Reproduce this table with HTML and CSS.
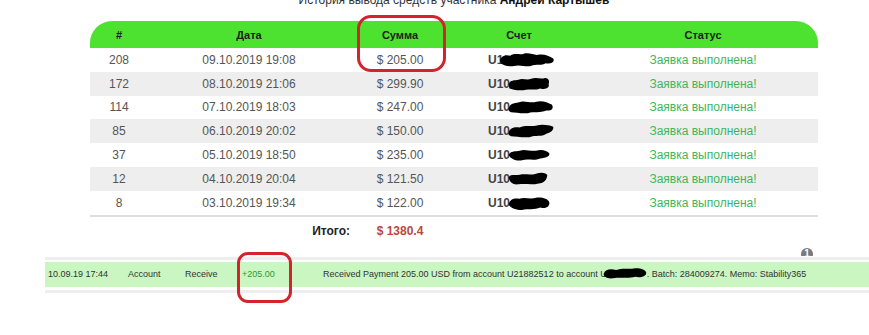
FILE: index.html
```html
<!DOCTYPE html>
<html lang="ru">
<head>
<meta charset="utf-8">
<title>История вывода средств</title>
<link rel="stylesheet" href="styles.css">
</head>
<body>
<div class="page">
  <h1 class="title">История вывода средств участника <b>Андрей Картышев</b></h1>

  <div class="table">
    <div class="row head"><div>#</div><div>Дата</div><div>Сумма</div><div>Счет</div><div>Статус</div></div>
    <div class="row"><div>208</div><div>09.10.2019 19:08</div><div>$ 205.00</div><div class="acc">U1<svg class="blob b1" viewBox="0 0 60 16" preserveAspectRatio="none"><path d="M1 9 C2 5 6 2 12 4 C16 1 22 3 26 2 C32 0 38 4 42 3 C48 2 54 4 58 7 C60 10 57 13 50 12 C46 15 40 12 34 15 C28 16 22 13 16 15 C10 16 4 14 2 12 Z"/></svg></div><div class="ok">Заявка выполнена!</div></div>
    <div class="row"><div>172</div><div>08.10.2019 21:06</div><div>$ 299.90</div><div class="acc">U10<svg class="blob b2" viewBox="0 0 60 16" preserveAspectRatio="none"><path d="M1 8 C3 3 9 4 15 3 C21 1 27 4 33 2 C41 0 47 3 53 1 C58 1 60 5 58 8 C60 12 54 15 46 13 C38 16 30 13 22 15 C14 16 6 14 2 13 Z"/></svg></div><div class="ok">Заявка выполнена!</div></div>
    <div class="row"><div>114</div><div>07.10.2019 18:03</div><div>$ 247.00</div><div class="acc">U10<svg class="blob b3" viewBox="0 0 60 16" preserveAspectRatio="none"><path d="M1 9 C3 3 10 4 17 2 C24 1 30 4 37 2 C44 0 52 3 57 5 C60 8 58 13 50 12 C42 15 34 13 26 15 C18 16 10 14 4 14 C1 13 0 11 1 9 Z"/></svg></div><div class="ok">Заявка выполнена!</div></div>
    <div class="row"><div>85</div><div>06.10.2019 20:02</div><div>$ 150.00</div><div class="acc">U10<svg class="blob b3" viewBox="0 0 60 16" preserveAspectRatio="none"><path d="M1 10 C2 5 8 3 15 4 C22 1 30 3 36 2 C44 0 52 1 59 3 C60 7 55 10 50 11 C44 15 36 12 28 15 C20 16 10 14 4 14 C1 13 0 12 1 10 Z"/></svg></div><div class="ok">Заявка выполнена!</div></div>
    <div class="row"><div>37</div><div>05.10.2019 18:50</div><div>$ 235.00</div><div class="acc">U10<svg class="blob b2" viewBox="0 0 60 16" preserveAspectRatio="none"><path d="M1 8 C3 3 10 4 17 3 C24 1 32 4 40 3 C48 1 56 3 59 6 C60 10 54 11 46 12 C38 15 28 12 20 14 C12 15 4 13 1 8 Z"/></svg></div><div class="ok">Заявка выполнена!</div></div>
    <div class="row"><div>12</div><div>04.10.2019 20:04</div><div>$ 121.50</div><div class="acc">U10<svg class="blob b4" viewBox="0 0 60 16" preserveAspectRatio="none"><path d="M1 6 C3 2 10 4 18 3 C26 2 34 4 42 2 C50 0 58 1 59 4 C58 9 54 13 46 13 C36 15 26 13 16 14 C8 15 2 12 1 6 Z"/></svg></div><div class="ok">Заявка выполнена!</div></div>
    <div class="row"><div>8</div><div>03.10.2019 19:34</div><div>$ 122.00</div><div class="acc">U10<svg class="blob b2" viewBox="0 0 60 16" preserveAspectRatio="none"><path d="M1 10 C2 4 8 2 16 3 C24 1 32 4 40 2 C48 1 57 3 59 7 C60 12 54 15 46 13 C38 16 28 14 20 16 C12 16 4 14 1 10 Z"/></svg></div><div class="ok">Заявка выполнена!</div></div>
  </div>

  <div class="total">
    <div></div>
    <div class="total-label">Итого:</div>
    <div class="total-sum">$ 1380.4</div>
  </div>

  <div class="badge-clip"><span class="badge">1</span></div>

  <div class="tx">
    <div class="tx-row">
      <span class="tx-date">10.09.19 17:44</span>
      <span class="tx-type">Account</span>
      <span class="tx-kind">Receive</span>
      <span class="tx-amount">+205.00</span>
      <span class="tx-desc">Received Payment 205.00 USD from account U21882512 to account U<svg class="blob b5" viewBox="0 0 60 16" preserveAspectRatio="none"><path d="M1 9 C3 3 10 2 18 4 C26 1 34 3 42 2 C50 1 59 4 59 8 C59 12 52 15 44 13 C34 16 24 13 14 15 C6 16 0 13 1 9 Z"/></svg>. Batch: 284009274. Memo: Stability365</span>
    </div>
  </div>

  <div class="mark mark-sum"></div>
  <div class="mark mark-tx"></div>
</div>
</body>
</html>
```

FILE: styles.css
```css
* { box-sizing: border-box; }

html, body {
  margin: 0;
  padding: 0;
  background: #fff;
}

body {
  font-family: "Liberation Sans", Arial, sans-serif;
  overflow: hidden;
}

.page {
  position: relative;
  width: 869px;
  height: 335px;
  overflow: hidden;
}

.title {
  margin: -7px 0 0 90px;
  width: 728px;
  text-align: center;
  font-size: 12px;
  line-height: 14px;
  font-weight: normal;
  color: #333;
}

.title b {
  color: #111;
}

.table {
  margin: 14px 0 0 90px;
  width: 728px;
  border-bottom: 2px solid #dedede;
}

.row {
  display: grid;
  grid-template-columns: 58px 202px 100px 138px 230px;
  height: 23.8px;
  align-items: center;
  text-align: center;
  font-size: 12px;
  color: #555;
}

.row:nth-child(odd):not(.head) {
  background: #eeeeee;
}

.row.head {
  height: 27px;
  background: #4de22f;
  border-radius: 22px 22px 0 0;
  font-size: 11px;
  font-weight: bold;
  color: #1c1c1c;
}

.acc {
  display: flex;
  align-items: center;
  text-align: left;
  padding-left: 38px;
  font-weight: bold;
  color: #444;
}

.blob {
  display: inline-block;
  height: 14px;
  fill: #000;
  margin-left: -2px;
}

.b1 { width: 56px; height: 15px; margin-left: -4px; }
.b2 { width: 42px; }
.b3 { width: 46px; }
.b4 { width: 40px; }
.b5 { width: 44px; height: 12px; vertical-align: middle; margin: -2px 0 0 -4px; }

.ok {
  color: #3db65a;
}

.total {
  margin-left: 90px;
  width: 728px;
  height: 28px;
  display: grid;
  grid-template-columns: 58px 202px 100px;
  align-items: center;
  font-size: 12px;
  font-weight: bold;
}

.total-label {
  text-align: right;
  color: #222;
}

.total-sum {
  text-align: center;
  color: #b9483a;
}

.badge-clip {
  position: absolute;
  left: 801px;
  top: 248px;
  width: 12px;
  height: 8px;
  overflow: hidden;
}

.badge {
  display: block;
  width: 12px;
  height: 12px;
  border-radius: 50%;
  background: #7a7a7a;
  color: #fff;
  font-size: 10px;
  font-weight: bold;
  line-height: 12px;
  text-align: center;
}

.tx {
  margin: 12px 0 0 45px;
  border-top: 3px solid #eeeeee;
  border-bottom: 3px solid #eeeeee;
  padding: 2px 0 3px;
  background: #fff;
}

.tx-row {
  display: flex;
  align-items: center;
  height: 25px;
  background: #c9f6c1;
  font-size: 9px;
  color: #333;
  white-space: nowrap;
}

.tx-date { width: 83px; padding-left: 3px; }
.tx-type { width: 57px; }
.tx-kind { width: 57px; }
.tx-amount { width: 81px; color: #2e9a3a; }
.tx-desc { flex: 1; }

.mark {
  position: absolute;
  border: 3px solid #d5232c;
  border-radius: 14px;
}

.mark-sum {
  left: 357px;
  top: 15px;
  width: 89px;
  height: 57px;
}

.mark-tx {
  left: 237px;
  top: 252px;
  width: 55px;
  height: 51px;
  border-radius: 11px;
}
```
